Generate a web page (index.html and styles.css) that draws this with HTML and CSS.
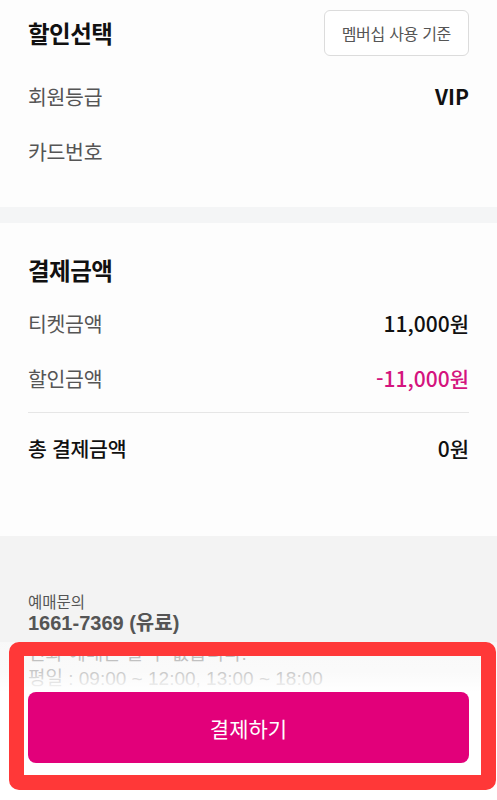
FILE: index.html
```html
<!DOCTYPE html>
<html lang="ko">
<head>
    <meta charset="UTF-8">
    <meta name="viewport" content="width=device-width, initial-scale=1.0">
    <title>결제</title>
    <link rel="stylesheet" href="styles.css">
</head>
<body>
    <div class="page">
        <section class="panel discount">
            <div class="panel-head">
                <h2 class="panel-title">할인선택</h2>
                <button class="ghost-btn">멤버십 사용 기준</button>
            </div>
            <div class="rows">
                <div class="row"><span class="label">회원등급</span><span class="value strong">VIP</span></div>
                <div class="row"><span class="label">카드번호</span><span class="value"></span></div>
            </div>
        </section>

        <div class="gap"></div>

        <section class="panel payment">
            <h2 class="panel-title">결제금액</h2>
            <div class="rows">
                <div class="row"><span class="label">티켓금액</span><span class="value">11,000원</span></div>
                <div class="row"><span class="label">할인금액</span><span class="value pink">-11,000원</span></div>
            </div>
            <hr class="divider">
            <div class="row total"><span class="label">총 결제금액</span><span class="value">0원</span></div>
        </section>

        <section class="info">
            <p class="info-label">예매문의</p>
            <p class="info-phone">1661-7369 (유료)</p>
            <p class="info-line first">전화 예매는 할 수 없습니다.</p>
            <p class="info-line">평일 : 09:00 ~ 12:00, 13:00 ~ 18:00</p>
            <p class="info-line">주말 및 공휴일 휴무</p>
        </section>

        <div class="bottom-bar">
            <button class="pay-btn">결제하기</button>
        </div>
        <div class="highlight"></div>
    </div>
</body>
</html>
```

FILE: styles.css
```css
body {
    margin: 0;
    font-family: "Noto Sans CJK KR", "Noto Sans", sans-serif;
    background: #f3f3f3;
    color: #111;
}

.page {
    position: relative;
    width: 497px;
    height: 800px;
    overflow: hidden;
    background: #f3f3f3;
}

.panel {
    background: #fdfdfd;
    padding: 10px 28px 29px;
}

.panel-head {
    display: flex;
    justify-content: space-between;
    align-items: center;
    height: 46px;
}

.panel-title {
    margin: 0;
    font-size: 23.5px;
    line-height: 32px;
    font-weight: 700;
    letter-spacing: -0.5px;
}

.ghost-btn {
    height: 46px;
    padding: 0 17px;
    border: 1px solid #dcdcdc;
    border-radius: 6px;
    background: #fff;
    font-family: inherit;
    font-size: 16px;
    color: #555;
    letter-spacing: -0.3px;
}

.discount .rows {
    margin-top: 12px;
}

.row {
    display: flex;
    justify-content: space-between;
    align-items: center;
    height: 55px;
    font-size: 21px;
}

.label {
    font-size: 20.5px;
    color: #555;
    letter-spacing: -0.3px;
}

.value {
    font-weight: 500;
    color: #111;
}

.value.strong {
    font-weight: 700;
}

.value.pink {
    color: #d4147e;
}

.gap {
    height: 16px;
    background: #f4f5f6;
}

.payment {
    padding: 31px 28px 61px;
}

.payment .rows {
    margin-top: 9px;
}

.divider {
    margin: 7px 0 7px;
    border: 0;
    border-top: 1px solid #e6e6e6;
}

.row.total .label {
    color: #111;
    font-weight: 500;
}

.info {
    padding: 55px 28px 0;
    color: #555;
}

.info p {
    margin: 0;
}

.info-label {
    font-size: 15.5px;
    line-height: 20px;
}

.info-phone {
    font-family: "Liberation Sans", "Noto Sans CJK KR", sans-serif;
    font-size: 20px;
    line-height: 24px;
    font-weight: 700;
}

.info-line {
    font-family: "Liberation Sans", "Noto Sans CJK KR", sans-serif;
    font-size: 19px;
    line-height: 25px;
    color: #777;
}

.info-line.first {
    margin-top: 6px;
}

.bottom-bar {
    position: absolute;
    left: 0;
    right: 0;
    top: 642px;
    bottom: 0;
    padding: 50px 28px 0 28px;
    background: linear-gradient(rgba(255, 255, 255, 0.45) 0, rgba(255, 255, 255, 0.6) 30px, #fff 50px);
}

.pay-btn {
    display: block;
    width: 100%;
    height: 71px;
    border: 0;
    border-radius: 8px;
    background: #e2007a;
    color: #fff;
    font-family: inherit;
    font-size: 21px;
}

.highlight {
    position: absolute;
    left: 9px;
    top: 642px;
    width: 487px;
    height: 148px;
    box-sizing: border-box;
    border: 15px solid #ff3838;
    border-top-width: 14px;
    border-radius: 10px;
}
```
